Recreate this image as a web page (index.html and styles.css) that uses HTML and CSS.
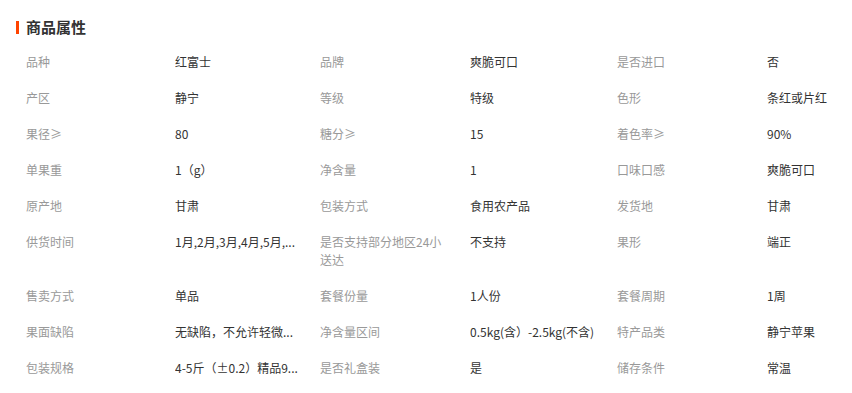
FILE: index.html
```html
<!DOCTYPE html>
<html lang="zh-CN">
<head>
<meta charset="utf-8">
<title>商品属性</title>
<link rel="stylesheet" href="styles.css">
</head>
<body>
<div class="attrs">
  <h2 class="title">商品属性</h2>
  <div class="grid">
    <div class="k">品种</div><div class="v">红富士</div>
    <div class="k">品牌</div><div class="v">爽脆可口</div>
    <div class="k">是否进口</div><div class="v">否</div>

    <div class="k">产区</div><div class="v">静宁</div>
    <div class="k">等级</div><div class="v">特级</div>
    <div class="k">色形</div><div class="v">条红或片红</div>

    <div class="k">果径≥</div><div class="v">80</div>
    <div class="k">糖分≥</div><div class="v">15</div>
    <div class="k">着色率≥</div><div class="v">90%</div>

    <div class="k">单果重</div><div class="v">1（g）</div>
    <div class="k">净含量</div><div class="v">1</div>
    <div class="k">口味口感</div><div class="v">爽脆可口</div>

    <div class="k">原产地</div><div class="v">甘肃</div>
    <div class="k">包装方式</div><div class="v">食用农产品</div>
    <div class="k">发货地</div><div class="v">甘肃</div>

    <div class="k">供货时间</div><div class="v">1月,2月,3月,4月,5月,...</div>
    <div class="k">是否支持部分地区24小送达</div><div class="v">不支持</div>
    <div class="k">果形</div><div class="v">端正</div>

    <div class="k">售卖方式</div><div class="v">单品</div>
    <div class="k">套餐份量</div><div class="v">1人份</div>
    <div class="k">套餐周期</div><div class="v">1周</div>

    <div class="k">果面缺陷</div><div class="v">无缺陷，不允许轻微...</div>
    <div class="k">净含量区间</div><div class="v">0.5kg(含）-2.5kg(不含)</div>
    <div class="k">特产品类</div><div class="v">静宁苹果</div>

    <div class="k">包装规格</div><div class="v">4-5斤（±0.2）精品9...</div>
    <div class="k">是否礼盒装</div><div class="v">是</div>
    <div class="k">储存条件</div><div class="v">常温</div>
  </div>
</div>
</body>
</html>
```
FILE: styles.css
```css
html, body {
  margin: 0;
  padding: 0;
  background: #fff;
}
body {
  font-family: "Noto Sans CJK SC", "Liberation Sans", sans-serif;
  font-size: 12px;
  color: #333;
}
.attrs {
  padding: 18px 0 0 16px;
}
.title {
  margin: 0;
  display: flex;
  align-items: center;
  gap: 7px;
  font-size: 15px;
  font-weight: bold;
  line-height: 18px;
  color: #333;
}
.title::before {
  content: "";
  width: 3px;
  height: 13px;
  background: #ff4400;
}
.grid {
  margin-top: 8px;
  padding-left: 10px;
  display: grid;
  grid-template-columns: 149px 145px 150px 147px 150px 1fr;
}
.k, .v {
  padding: 9px 0;
  line-height: 18px;
}
.k {
  color: #999;
  padding-right: 26px;
}
.v {
  color: #333;
  padding-right: 10px;
  white-space: nowrap;
  overflow: hidden;
}
```
